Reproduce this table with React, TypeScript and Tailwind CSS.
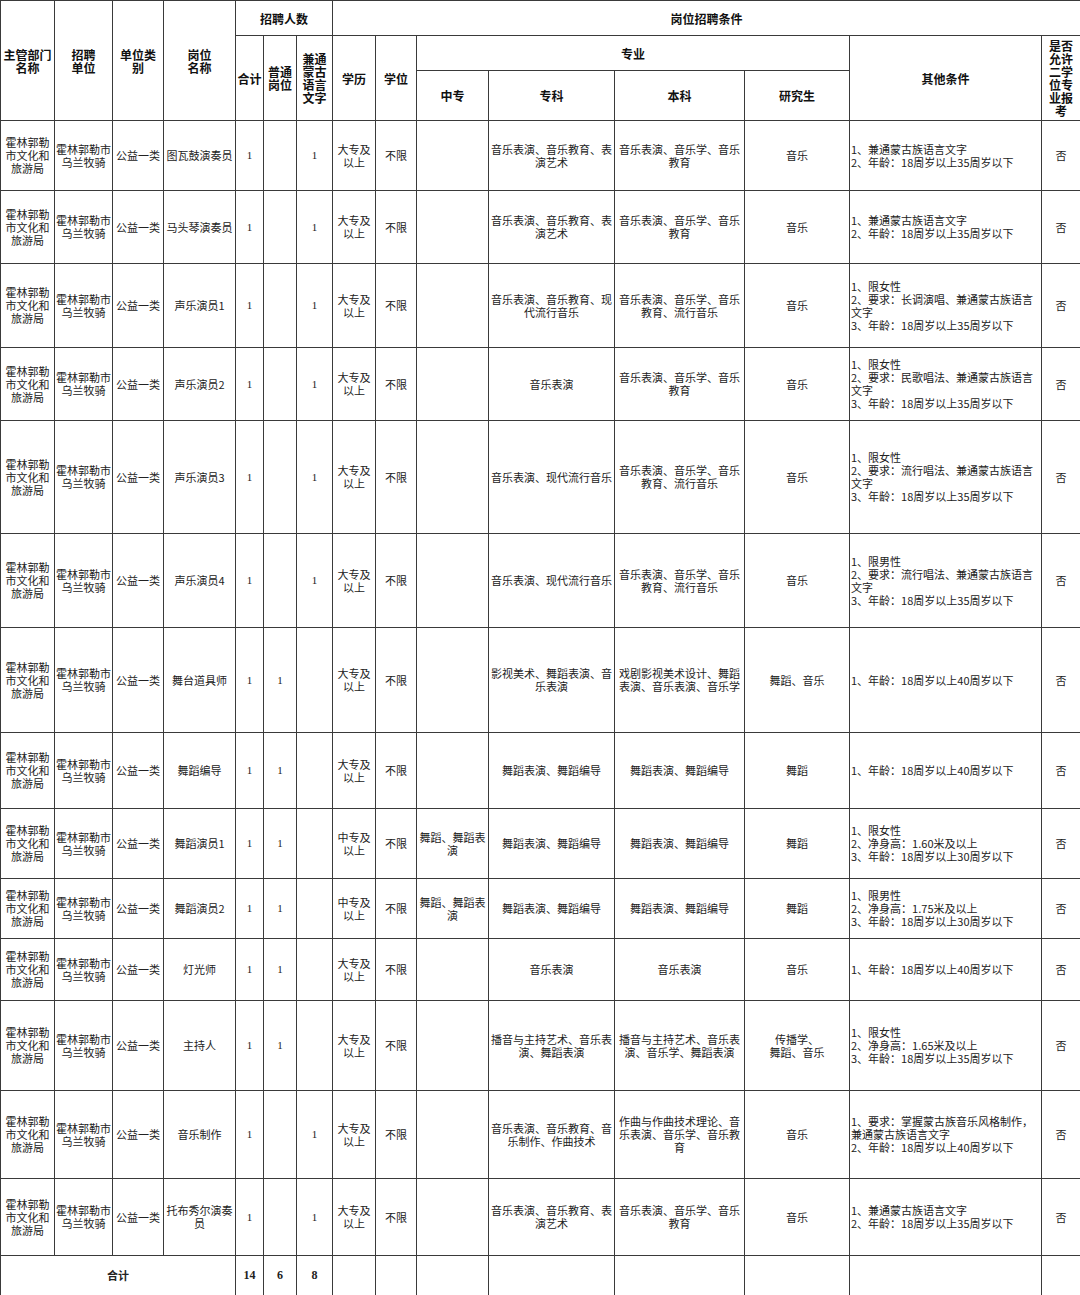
import React from 'react';

type Row = {
  h: string;
  post: string;
  total: string;
  normal: string;
  mongol: string;
  edu: string;
  zhongzhuan: string;
  zhuanke: string;
  benke: string;
  grad: string;
  other: string[];
};

const ROWS: Row[] = [
  { h: 'h-[70px]', post: '图瓦鼓演奏员', total: '1', normal: '', mongol: '1', edu: '大专及以上', zhongzhuan: '', zhuanke: '音乐表演、音乐教育、表演艺术', benke: '音乐表演、音乐学、音乐教育', grad: '音乐', other: ['1、兼通蒙古族语言文字', '2、年龄：18周岁以上35周岁以下'] },
  { h: 'h-[73px]', post: '马头琴演奏员', total: '1', normal: '', mongol: '1', edu: '大专及以上', zhongzhuan: '', zhuanke: '音乐表演、音乐教育、表演艺术', benke: '音乐表演、音乐学、音乐教育', grad: '音乐', other: ['1、兼通蒙古族语言文字', '2、年龄：18周岁以上35周岁以下'] },
  { h: 'h-[84px]', post: '声乐演员1', total: '1', normal: '', mongol: '1', edu: '大专及以上', zhongzhuan: '', zhuanke: '音乐表演、音乐教育、现代流行音乐', benke: '音乐表演、音乐学、音乐教育、流行音乐', grad: '音乐', other: ['1、限女性', '2、要求：长调演唱、兼通蒙古族语言文字', '3、年龄：18周岁以上35周岁以下'] },
  { h: 'h-[73px]', post: '声乐演员2', total: '1', normal: '', mongol: '1', edu: '大专及以上', zhongzhuan: '', zhuanke: '音乐表演', benke: '音乐表演、音乐学、音乐教育', grad: '音乐', other: ['1、限女性', '2、要求：民歌唱法、兼通蒙古族语言文字', '3、年龄：18周岁以上35周岁以下'] },
  { h: 'h-[113px]', post: '声乐演员3', total: '1', normal: '', mongol: '1', edu: '大专及以上', zhongzhuan: '', zhuanke: '音乐表演、现代流行音乐', benke: '音乐表演、音乐学、音乐教育、流行音乐', grad: '音乐', other: ['1、限女性', '2、要求：流行唱法、兼通蒙古族语言文字', '3、年龄：18周岁以上35周岁以下'] },
  { h: 'h-[94px]', post: '声乐演员4', total: '1', normal: '', mongol: '1', edu: '大专及以上', zhongzhuan: '', zhuanke: '音乐表演、现代流行音乐', benke: '音乐表演、音乐学、音乐教育、流行音乐', grad: '音乐', other: ['1、限男性', '2、要求：流行唱法、兼通蒙古族语言文字', '3、年龄：18周岁以上35周岁以下'] },
  { h: 'h-[105px]', post: '舞台道具师', total: '1', normal: '1', mongol: '', edu: '大专及以上', zhongzhuan: '', zhuanke: '影视美术、舞蹈表演、音乐表演', benke: '戏剧影视美术设计、舞蹈表演、音乐表演、音乐学', grad: '舞蹈、音乐', other: ['1、年龄：18周岁以上40周岁以下'] },
  { h: 'h-[76px]', post: '舞蹈编导', total: '1', normal: '1', mongol: '', edu: '大专及以上', zhongzhuan: '', zhuanke: '舞蹈表演、舞蹈编导', benke: '舞蹈表演、舞蹈编导', grad: '舞蹈', other: ['1、年龄：18周岁以上40周岁以下'] },
  { h: 'h-[70px]', post: '舞蹈演员1', total: '1', normal: '1', mongol: '', edu: '中专及以上', zhongzhuan: '舞蹈、舞蹈表演', zhuanke: '舞蹈表演、舞蹈编导', benke: '舞蹈表演、舞蹈编导', grad: '舞蹈', other: ['1、限女性', '2、净身高：1.60米及以上', '3、年龄：18周岁以上30周岁以下'] },
  { h: 'h-[60px]', post: '舞蹈演员2', total: '1', normal: '1', mongol: '', edu: '中专及以上', zhongzhuan: '舞蹈、舞蹈表演', zhuanke: '舞蹈表演、舞蹈编导', benke: '舞蹈表演、舞蹈编导', grad: '舞蹈', other: ['1、限男性', '2、净身高：1.75米及以上', '3、年龄：18周岁以上30周岁以下'] },
  { h: 'h-[62px]', post: '灯光师', total: '1', normal: '1', mongol: '', edu: '大专及以上', zhongzhuan: '', zhuanke: '音乐表演', benke: '音乐表演', grad: '音乐', other: ['1、年龄：18周岁以上40周岁以下'] },
  { h: 'h-[90px]', post: '主持人', total: '1', normal: '1', mongol: '', edu: '大专及以上', zhongzhuan: '', zhuanke: '播音与主持艺术、音乐表演、舞蹈表演', benke: '播音与主持艺术、音乐表演、音乐学、舞蹈表演', grad: '传播学、\n舞蹈、音乐', other: ['1、限女性', '2、净身高：1.65米及以上', '3、年龄：18周岁以上35周岁以下'] },
  { h: 'h-[88px]', post: '音乐制作', total: '1', normal: '', mongol: '1', edu: '大专及以上', zhongzhuan: '', zhuanke: '音乐表演、音乐教育、音乐制作、作曲技术', benke: '作曲与作曲技术理论、音乐表演、音乐学、音乐教育', grad: '音乐', other: ['1、要求：掌握蒙古族音乐风格制作，兼通蒙古族语言文字', '2、年龄：18周岁以上40周岁以下'] },
  { h: 'h-[77px]', post: '托布秀尔演奏员', total: '1', normal: '', mongol: '1', edu: '大专及以上', zhongzhuan: '', zhuanke: '音乐表演、音乐教育、表演艺术', benke: '音乐表演、音乐学、音乐教育', grad: '音乐', other: ['1、兼通蒙古族语言文字', '2、年龄：18周岁以上35周岁以下'] },
];

const th = 'border border-[#3a3a3a] px-px text-center align-middle font-bold text-[12px] leading-[13px] text-[#111]';
const td = 'border border-[#3a3a3a] px-px text-center align-middle text-[11px] leading-[13px] text-[#222] whitespace-pre-line';
const num = 'font-["Liberation_Serif",serif]';

export default function App() {
  return (
    <div className="w-[1080px] bg-white font-['Noto_Sans_CJK_SC','Noto_Sans',sans-serif]">
      <table className="w-[1080px] table-fixed border-collapse">
        <colgroup>
          <col className="w-[54px]" />
          <col className="w-[58px]" />
          <col className="w-[51px]" />
          <col className="w-[72px]" />
          <col className="w-[28px]" />
          <col className="w-[33px]" />
          <col className="w-[36px]" />
          <col className="w-[43px]" />
          <col className="w-[41px]" />
          <col className="w-[72px]" />
          <col className="w-[126px]" />
          <col className="w-[130px]" />
          <col className="w-[105px]" />
          <col className="w-[192px]" />
          <col className="w-[39px]" />
        </colgroup>
        <thead>
          <tr className="h-[35px]">
            <th rowSpan={3} className={th}>主管部门<br />名称</th>
            <th rowSpan={3} className={th}>招聘<br />单位</th>
            <th rowSpan={3} className={th}>单位类<br />别</th>
            <th rowSpan={3} className={th}>岗位<br />名称</th>
            <th colSpan={3} className={th}>招聘人数</th>
            <th colSpan={8} className={th}>岗位招聘条件</th>
          </tr>
          <tr className="h-[35px]">
            <th rowSpan={2} className={th}>合计</th>
            <th rowSpan={2} className={th}>普通<br />岗位</th>
            <th rowSpan={2} className={th}>兼通<br />蒙古<br />语言<br />文字</th>
            <th rowSpan={2} className={th}>学历</th>
            <th rowSpan={2} className={th}>学位</th>
            <th colSpan={4} className={th}>专业</th>
            <th rowSpan={2} className={th}>其他条件</th>
            <th rowSpan={2} className={th}>是否<br />允许<br />二学<br />位专<br />业报<br />考</th>
          </tr>
          <tr className="h-[50px]">
            <th className={th}>中专</th>
            <th className={th}>专科</th>
            <th className={th}>本科</th>
            <th className={th}>研究生</th>
          </tr>
        </thead>
        <tbody>
          {ROWS.map((r) => (
            <tr key={r.post} className={r.h}>
              <td className={td}>霍林郭勒<br />市文化和<br />旅游局</td>
              <td className={td}>霍林郭勒市<br />乌兰牧骑</td>
              <td className={td}>公益一类</td>
              <td className={td}>{r.post}</td>
              <td className={`${td} ${num}`}>{r.total}</td>
              <td className={`${td} ${num}`}>{r.normal}</td>
              <td className={`${td} ${num}`}>{r.mongol}</td>
              <td className={td}>{r.edu.slice(0, 3)}<br />{r.edu.slice(3)}</td>
              <td className={td}>不限</td>
              <td className={td}>{r.zhongzhuan}</td>
              <td className={td}>{r.zhuanke}</td>
              <td className={td}>{r.benke}</td>
              <td className={td}>{r.grad}</td>
              <td className={`${td} !text-left`}>
                {r.other.map((line) => (
                  <div key={line}>{line}</div>
                ))}
              </td>
              <td className={td}>否</td>
            </tr>
          ))}
          <tr className="h-[40px]">
            <td colSpan={4} className={`${td} font-bold`}>合计</td>
            <td className={`${td} ${num} font-bold text-[12px]`}>14</td>
            <td className={`${td} ${num} font-bold text-[12px]`}>6</td>
            <td className={`${td} ${num} font-bold text-[12px]`}>8</td>
            <td className={td}></td>
            <td className={td}></td>
            <td className={td}></td>
            <td className={td}></td>
            <td className={td}></td>
            <td className={td}></td>
            <td className={td}></td>
            <td className={td}></td>
          </tr>
        </tbody>
      </table>
    </div>
  );
}
